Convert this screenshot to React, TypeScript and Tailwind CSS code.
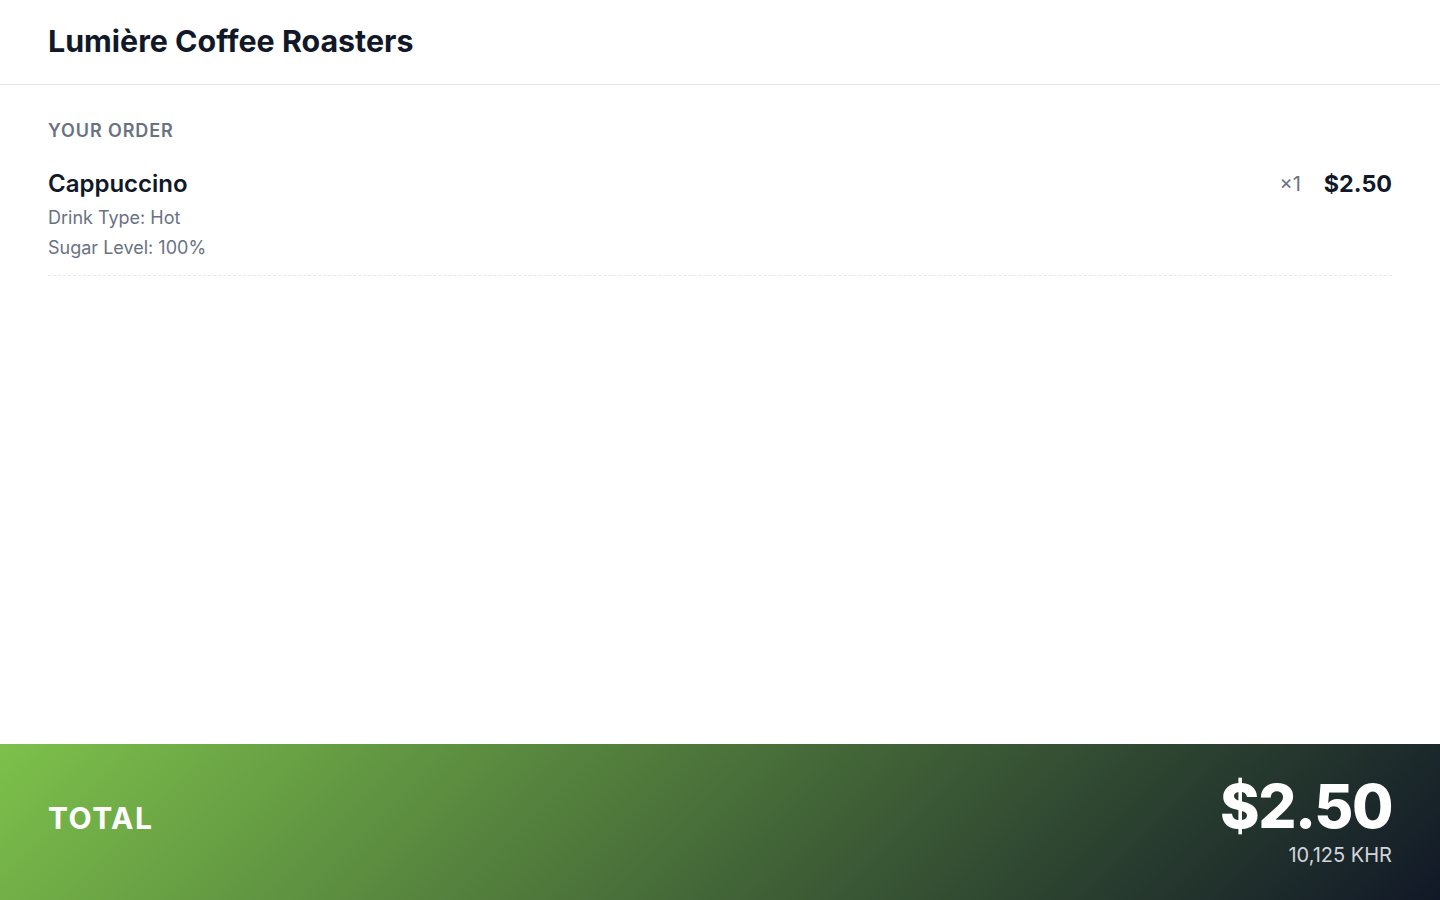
import React from 'react';

interface OrderItem {
  name: string;
  options: string[];
  qty: number;
  price: string;
}

const items: OrderItem[] = [
  { name: 'Cappuccino', options: ['Drink Type: Hot', 'Sugar Level: 100%'], qty: 1, price: '$2.50' },
];

export default function App() {
  return (
    <div className="min-h-screen flex flex-col bg-white text-gray-900" style={{ fontFamily: 'Inter, "Noto Sans", sans-serif' }}>
      <header className="h-[85px] px-12 flex items-center border-b border-gray-200">
        <h1 className="text-[30.4px] font-bold text-[#111827]">Lumière Coffee Roasters</h1>
      </header>

      <main className="flex-1 px-12 pt-[32px]">
        <h2 className="text-lg font-semibold uppercase tracking-wider leading-7 text-gray-500">Your Order</h2>
        <ul className="mt-[23px]">
          {items.map((item, index) => (
            <li key={index} className="flex justify-between border-b border-dashed border-gray-200 pb-[12px]">
              <div>
                <p className="text-2xl font-semibold leading-8 text-[#111827]">{item.name}</p>
                <div className="mt-[3px]">
                  {item.options.map((opt) => (
                    <p key={opt} className="text-lg leading-[30px] text-gray-500">{opt}</p>
                  ))}
                </div>
              </div>
              <div className="flex items-start gap-[23px]">
                <span className="text-xl leading-8 text-gray-500">×{item.qty}</span>
                <span className="text-[23.3px] font-bold leading-8 text-[#111827]">{item.price}</span>
              </div>
            </li>
          ))}
        </ul>
      </main>

      <footer className="h-[156px] px-12 flex items-center justify-between bg-[linear-gradient(135deg,#7dc14b,#111827)] text-white">
        <span className="mb-2 text-[30px] font-bold tracking-wider">TOTAL</span>
        <div className="flex flex-col items-end">
          <span className="text-6xl font-extrabold leading-none tracking-tight">$2.50</span>
          <span className="mt-[5px] text-xl text-gray-300">10,125 KHR</span>
        </div>
      </footer>
    </div>
  );
}
